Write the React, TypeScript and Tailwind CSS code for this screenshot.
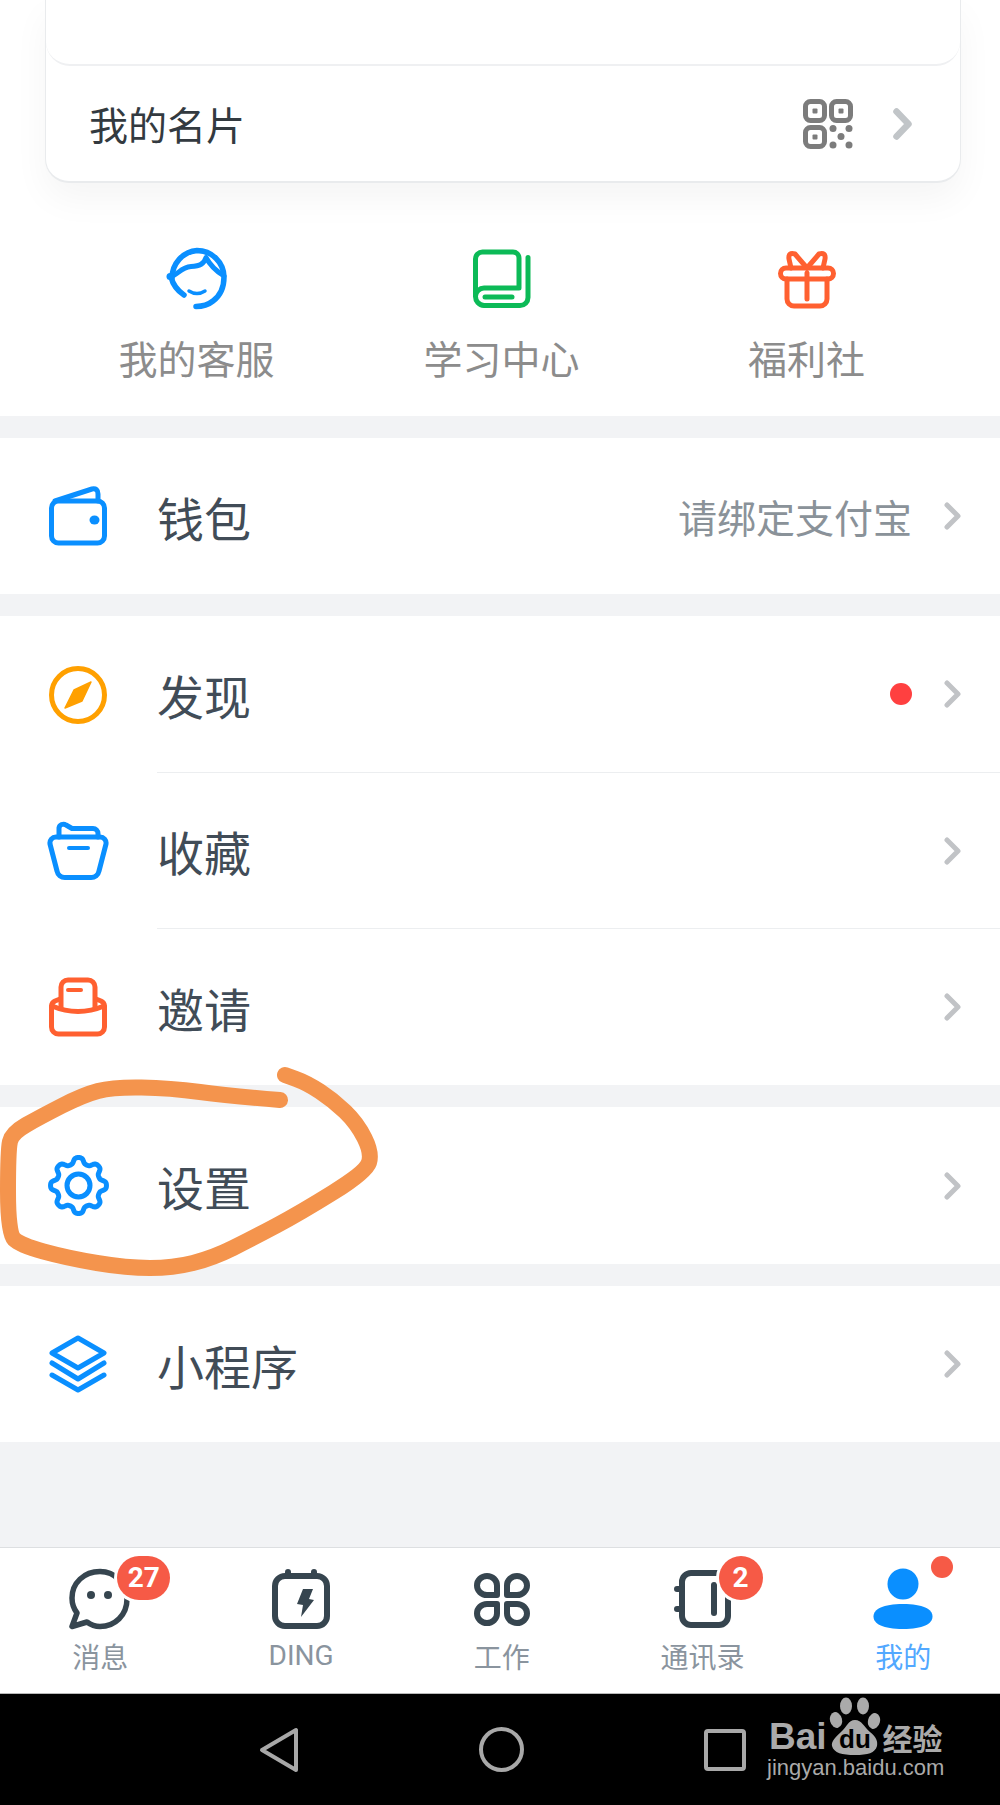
import type { ReactNode } from 'react';

const BLUE = '#0a8fff';
const SLATE = '#36454f';

// soft curve through the hand drawn points
function smoothPath(points: number[][]) {
  let d = `M${points[0][0]} ${points[0][1]}`;
  for (let i = 1; i < points.length - 1; i++) {
    const [x, y] = points[i];
    const [nx, ny] = points[i + 1];
    d += ` Q${x} ${y} ${(x + nx) / 2} ${(y + ny) / 2}`;
  }
  const last = points[points.length - 1];
  return `${d} L${last[0]} ${last[1]}`;
}

function gearPath() {
  const pts: string[] = [];
  for (let i = 0; i < 192; i++) {
    const a = (i / 192) * Math.PI * 2;
    const r = 25 + 3.2 * Math.tanh(1.6 * Math.cos(8 * a));
    pts.push(`${(30.5 + r * Math.cos(a)).toFixed(2)} ${(30.5 + r * Math.sin(a)).toFixed(2)}`);
  }
  return `M${pts.join(' L')}Z`;
}

const circled = [
  [280, 1100], [230, 1096], [170, 1088], [113, 1087], [83, 1095], [40, 1117], [12, 1133], [8, 1150],
  [8, 1233], [20, 1245], [67, 1258], [127, 1268], [173, 1268], [213, 1258], [253, 1238], [300, 1213],
  [366, 1172], [372, 1153], [357, 1123], [333, 1100], [307, 1083], [285, 1075],
];

function Chevron({ big }: { big?: boolean }) {
  return big ? (
    <svg width="19" height="32" viewBox="0 0 19 32" fill="none" stroke="#c1c5c8" strokeWidth="6.5" strokeLinecap="round" strokeLinejoin="round">
      <path d="M3.5 3.5 L15.5 16 L3.5 28.5" />
    </svg>
  ) : (
    <svg width="17" height="28" viewBox="0 0 17 28" fill="none" stroke="#c1c3c6" strokeWidth="5" strokeLinecap="round" strokeLinejoin="round">
      <path d="M3 3 L14 14 L3 25" />
    </svg>
  );
}

function QrIcon() {
  return (
    <svg width="50" height="50" viewBox="0 0 50 50" fill="none" stroke="#7c7c7c" strokeWidth="5">
      <rect x="2.5" y="2.5" width="19" height="19" rx="5" />
      <rect x="28.5" y="2.5" width="19" height="19" rx="5" />
      <rect x="2.5" y="28.5" width="19" height="19" rx="5" />
      <g fill="#7c7c7c" stroke="none">
        <rect x="9.5" y="9.5" width="5" height="5" rx="1" />
        <rect x="35.5" y="9.5" width="5" height="5" rx="1" />
        <rect x="9.5" y="35.5" width="5" height="5" rx="1" />
        <circle cx="30" cy="29.5" r="3.5" />
        <circle cx="46" cy="29.5" r="3.5" />
        <circle cx="38" cy="37.5" r="3.5" />
        <circle cx="30" cy="46" r="3.5" />
        <circle cx="46" cy="46" r="3.5" />
      </g>
    </svg>
  );
}

function ServiceIcon() {
  return (
    <svg width="64" height="64" viewBox="14 12 64 64" fill="none" stroke={BLUE} strokeWidth="5.5" strokeLinecap="round" strokeLinejoin="round">
      <path d="M20 42 C22 50 27 56 33 60" />
      <path d="M21 43 A27 28 0 0 1 46 15.500 A27 27 0 0 1 73 42 C73 52 70 60 62 66 C57 70 52 71.500 45 71.500" />
      <path d="M20 41.500 C27 40 30 32 40 31.500 C49 31 53 29 55 22.500 C59 30 65 36 73 41" strokeWidth="5" />
      <circle cx="19" cy="41.500" r="3.500" fill={BLUE} stroke="none" />
      <path d="M38 56 Q46 61 54 56" strokeWidth="3.500" />
    </svg>
  );
}

function BookIcon() {
  return (
    <svg width="64" height="64" viewBox="-3 -3 64 64" fill="none" stroke="#0cba57" strokeWidth="5" strokeLinecap="round" strokeLinejoin="round">
      <path d="M2.500 46 V9 a7 7 0 0 1 7-7 H40 a6 6 0 0 1 6 6 V38 H11 a8.700 8.700 0 0 0-8.500 8 a9 9 0 0 0 8.500 9.500 H47 a8 8 0 0 0 8-8 V7.500" />
      <path d="M12 47 H39" strokeWidth="5" />
    </svg>
  );
}

function GiftIcon() {
  return (
    <svg width="64" height="64" viewBox="-3 -3 64 64" fill="none" stroke="#ff6030" strokeWidth="5" strokeLinecap="round" strokeLinejoin="round">
      <rect x="2.500" y="18" width="53" height="11" rx="5.500" />
      <path d="M9 29 V49 a7 7 0 0 0 7 7 H42 a7 7 0 0 0 7-7 V29" />
      <path d="M29 23 V49" />
      <path d="M29 18 L17 4 Q10 2 11 9 L13 18" />
      <path d="M29 18 L41 4 Q48 2 47 9 L45 18" />
    </svg>
  );
}

function WalletIcon() {
  return (
    <svg className="shrink-0" width="58" height="60" viewBox="0 0 58 60" fill="none" stroke={BLUE} strokeWidth="5" strokeLinecap="round" strokeLinejoin="round">
      <rect x="2.500" y="15" width="53" height="42" rx="7" />
      <path d="M6 15 L43 3 Q49 2 49 8 V15" />
      <ellipse cx="45.500" cy="34" rx="5" ry="4.500" fill={BLUE} stroke="none" />
    </svg>
  );
}

function CompassIcon() {
  return (
    <svg className="shrink-0" width="58" height="60" viewBox="0 0 58 60" fill="none">
      <circle cx="29" cy="30" r="26.500" stroke="#ffa000" strokeWidth="5" />
      <path d="M42 17 L33 36 L16 43 L25 25Z" fill="#ffa000" stroke="#ffa000" strokeWidth="1.500" strokeLinejoin="round" />
    </svg>
  );
}

function FolderIcon() {
  return (
    <svg className="shrink-0" width="62" height="60" viewBox="0 0 62 60" fill="none" stroke={BLUE} strokeWidth="5" strokeLinecap="round" strokeLinejoin="round">
      <path d="M9 16 H53 a6 6 0 0 1 6 7 L52 50 a8 8 0 0 1-8 6.500 H18 a8 8 0 0 1-8-6.500 L3 23 a6 6 0 0 1 6-7Z" />
      <path d="M12 16 V7 a4.500 4.500 0 0 1 7-3 l6 3.500 H46 a5 5 0 0 1 5 5 V16" />
      <path d="M22 27 H41" strokeWidth="4" />
    </svg>
  );
}

function InviteIcon() {
  return (
    <svg className="shrink-0" width="58" height="60" viewBox="0 0 58 60" fill="none" stroke="#ff6030" strokeWidth="5" strokeLinecap="round" strokeLinejoin="round">
      <path d="M11 22 L6 24 a6 6 0 0 0-3.500 5 V50 a7 7 0 0 0 7 7 H48.500 a7 7 0 0 0 7-7 V29 a6 6 0 0 0-3.500-5 L47 22" />
      <path d="M3 29 Q29 40 55 29" />
      <path d="M12 30 V10 a7 7 0 0 1 7-7 H39 a7 7 0 0 1 7 7 V30" />
      <path d="M19 13 H32" strokeWidth="4" />
    </svg>
  );
}

function GearIcon() {
  return (
    <svg className="shrink-0" width="61" height="61" viewBox="0 0 61 61" fill="none" stroke={BLUE} strokeWidth="5" strokeLinejoin="round">
      <path d={gearPath()} />
      <circle cx="30.500" cy="30.500" r="11.500" />
    </svg>
  );
}

function LayersIcon() {
  return (
    <svg className="shrink-0" width="58" height="58" viewBox="0 0 58 58" fill="none" stroke={BLUE} strokeWidth="5" strokeLinecap="round" strokeLinejoin="round">
      <path d="M29 3 L55 18 L29 33 L3 18Z" />
      <path d="M3 28 L29 44 L55 28" />
      <path d="M3 40 L29 55 L55 40" />
    </svg>
  );
}

function MessageIcon() {
  return (
    <svg width="62" height="62" viewBox="0 0 62 62" fill="none" stroke={SLATE} strokeWidth="5.500" strokeLinecap="round" strokeLinejoin="round">
      <path d="M31 3.500 C15 3.500 3 15 3 30 C3 36 5 41 8 45 L3 58.500 L18 54 C22 57 26 58.500 31 58.500 C46 58.500 58 47 58 31 C58 16 46 3.500 31 3.500Z" />
      <circle cx="22" cy="27" r="4" fill={SLATE} stroke="none" />
      <circle cx="39" cy="27" r="4" fill={SLATE} stroke="none" />
    </svg>
  );
}

function DingIcon() {
  return (
    <svg width="58" height="60" viewBox="0 0 58 60" fill="none" stroke={SLATE} strokeWidth="6" strokeLinecap="round" strokeLinejoin="round">
      <rect x="3" y="7" width="52" height="50" rx="10" />
      <path d="M16 3 V7 M42 3 V7" />
      <path d="M31 20 H41 L37 30 L42 31 L29 48 L31 36 L25 35Z" fill={SLATE} stroke="none" />
    </svg>
  );
}

function WorkIcon() {
  return (
    <svg width="56" height="53" viewBox="0 0 56 53" fill="none" stroke={SLATE} strokeWidth="6" strokeLinejoin="round">
      <path d="M13 3 A10 9.500 0 0 1 23 12.500 V22 H13 A10 9.500 0 0 1 13 3Z" />
      <path d="M43 3 A10 9.500 0 0 1 43 22 H33 V12.500 A10 9.500 0 0 1 43 3Z" />
      <path d="M13 31 H23 V40.500 A10 9.500 0 1 1 13 31Z" />
      <path d="M33 31 H43 A10 9.500 0 1 1 33 40.500Z" />
    </svg>
  );
}

function ContactsIcon() {
  return (
    <svg width="58" height="58" viewBox="0 0 58 58" fill="none" stroke={SLATE} strokeWidth="6" strokeLinecap="round" strokeLinejoin="round">
      <rect x="8" y="3" width="46" height="52" rx="9" />
      <path d="M3 19 H8 M3 39 H8" />
      <path d="M40 15 V43" />
    </svg>
  );
}

function MeIcon() {
  return (
    <svg width="60" height="62" viewBox="0 0 60 62" fill={BLUE}>
      <circle cx="30" cy="16" r="15.500" />
      <path d="M30 36 C50 36 59.500 41 59.500 48.500 C59.500 56 50 61 30 61 C10 61 0.500 56 0.500 48.500 C0.500 41 10 36 30 36Z" />
    </svg>
  );
}

function Row({ icon, label, right, divider, tall }: { icon: ReactNode; label: string; right?: ReactNode; divider?: boolean; tall?: boolean }) {
  return (
    <div className={`flex bg-white ${tall ? 'h-[157px]' : 'h-[156px]'}`}>
      <div className="flex w-[157px] items-center pl-[49px]">
        <div className="flex w-[58px] justify-center">{icon}</div>
      </div>
      <div className={`flex flex-1 items-center pr-[39px] ${divider ? 'border-b border-[#eceef0]' : ''}`}>
        <span className="flex-1 text-[47px] leading-none text-[#414c57]">{label}</span>
        {right}
        <Chevron />
      </div>
    </div>
  );
}

function Tab({ icon, label, active, latin, badge }: { icon: ReactNode; label: string; active?: boolean; latin?: boolean; badge?: ReactNode }) {
  return (
    <div className="flex flex-col items-center">
      <div className="relative flex h-[62px] items-center">
        {icon}
        {badge}
      </div>
      <span className={`mt-[9px] text-[28px] leading-[34px] ${active ? 'text-[#52a8ff]' : 'text-[#8a949e]'} ${latin ? "font-['Roboto',sans-serif]" : ''}`}>
        {label}
      </span>
    </div>
  );
}

export default function App() {
  return (
    <div className="relative h-[1805px] w-[1000px] overflow-hidden bg-[#f2f3f5] font-['Noto_Sans_CJK_SC','Noto_Sans',sans-serif]">
      {/* Card and shortcuts */}
      <section className="h-[416px] bg-white">
        <div className="mx-[45px] h-[183px] w-[916px] rounded-b-[24px] border-x border-b-2 border-[#e9ebed] bg-white shadow-[0_16px_36px_rgba(0,0,0,0.045)]">
          <div className="h-[66px] rounded-b-[24px] border-b-2 border-[#eff0f2]" />
          <div className="flex h-[115px] items-center pl-[43px] pr-[48px]">
            <span className="flex-1 text-[39px] leading-none text-[#333a40]">我的名片</span>
            <QrIcon />
            <div className="ml-[40px] flex">
              <Chevron big />
            </div>
          </div>
        </div>
        <div className="mt-[64px] grid grid-cols-[repeat(3,305px)] pl-[44px]">
          {[
            { icon: <ServiceIcon />, label: '我的客服' },
            { icon: <BookIcon />, label: '学习中心' },
            { icon: <GiftIcon />, label: '福利社' },
          ].map((item) => (
            <div key={item.label} className="flex flex-col items-center">
              {item.icon}
              <span className="mt-[22px] text-[39px] leading-[48px] text-[#8c8c8c]">{item.label}</span>
            </div>
          ))}
        </div>
      </section>

      {/* Menu */}
      <div className="mt-[22px]">
        <Row
          icon={<WalletIcon />}
          label="钱包"
          right={<span className="mr-[32px] text-[39px] leading-none text-[#8a9299]">请绑定支付宝</span>}
        />
      </div>
      <div className="mt-[22px]">
        <Row
          tall
          divider
          icon={<CompassIcon />}
          label="发现"
          right={<span className="mr-[32px] h-[22px] w-[22px] rounded-full bg-[#ff4040]" />}
        />
        <Row divider icon={<FolderIcon />} label="收藏" />
        <Row icon={<InviteIcon />} label="邀请" />
      </div>
      <div className="mt-[22px]">
        <Row tall icon={<GearIcon />} label="设置" />
      </div>
      <div className="mt-[22px]">
        <Row icon={<LayersIcon />} label="小程序" />
      </div>

      {/* Tab bar */}
      <nav className="mt-[105px] grid h-[146px] grid-cols-[repeat(5,200.75px)] border-t border-[#dddfe1] bg-white pt-[20px]">
        <Tab
          icon={<MessageIcon />}
          label="消息"
          badge={
            <span className="absolute left-[48px] top-[-12px] flex h-[44px] w-[53px] items-center justify-center rounded-full bg-[#f65a46] font-['Roboto',sans-serif] text-[28px] font-bold leading-none text-white ring-[3px] ring-white">
              27
            </span>
          }
        />
        <Tab icon={<DingIcon />} label="DING" latin />
        <Tab icon={<WorkIcon />} label="工作" />
        <Tab
          icon={<ContactsIcon />}
          label="通讯录"
          badge={
            <span className="absolute left-[45px] top-[-12px] flex h-[44px] w-[44px] items-center justify-center rounded-full bg-[#f65a46] font-['Roboto',sans-serif] text-[28px] font-bold leading-none text-white ring-[3px] ring-white">
              2
            </span>
          }
        />
        <Tab
          active
          icon={<MeIcon />}
          label="我的"
          badge={<span className="absolute left-[58px] top-[-12px] h-[22px] w-[22px] rounded-full bg-[#f65a46]" />}
        />
      </nav>

      {/* Android nav bar */}
      <div className="relative flex h-[112px] items-center border-t border-[#b9b9b9] bg-black pl-[259px]">
        <svg width="40" height="46" viewBox="0 0 40 46" fill="none" stroke="#a8a8a8" strokeWidth="4" strokeLinejoin="round">
          <path d="M37 3 V43 L3 23Z" />
        </svg>
        <span className="ml-[180px] h-[45px] w-[45px] rounded-full border-4 border-[#a8a8a8]" />
        <span className="ml-[180px] h-[42px] w-[42px] rounded-[4px] border-4 border-[#a8a8a8]" />

        {/* Baidu watermark */}
        <div className="absolute left-[767px] top-[3px] w-[180px] text-[#aaaaaa]">
          <div className="flex h-[58px] items-end">
            <span className="ml-[2px] font-['Liberation_Sans',sans-serif] text-[37px] font-bold leading-[37px]">Bai</span>
            <svg className="ml-[2px] shrink-0" width="52" height="58" viewBox="0 0 52 58" fill="#aaaaaa">
              <ellipse cx="7" cy="23" rx="6" ry="8" transform="rotate(-15 7 23)" />
              <ellipse cx="17" cy="9" rx="6" ry="8.500" />
              <ellipse cx="34" cy="9" rx="6" ry="8.500" />
              <ellipse cx="45" cy="24" rx="6" ry="8" transform="rotate(15 45 24)" />
              <path d="M26 23 C33 23 35 30 41 35 C47 40 49 44 48 49 C46 56 39 58 26 58 C13 58 5 56 3 49 C2 44 7 40 12 35 C18 30 19 23 26 23Z" />
              <text x="26" y="51" textAnchor="middle" fill="#000" fontSize="26" fontWeight="700" fontFamily="Liberation Sans, sans-serif">du</text>
            </svg>
            <span className="ml-[2px] text-[30px] font-bold leading-[36px]">经验</span>
          </div>
          <div className="font-['Liberation_Sans',sans-serif] text-[22px] leading-[26px]">jingyan.baidu.com</div>
        </div>
      </div>

      {/* Hand drawn circle around the settings row */}
      <svg className="pointer-events-none absolute left-0 top-0" width="1000" height="1805" fill="none">
        <path d={smoothPath(circled)} stroke="#f4944d" strokeWidth="16" strokeLinecap="round" strokeLinejoin="round" />
      </svg>
    </div>
  );
}
